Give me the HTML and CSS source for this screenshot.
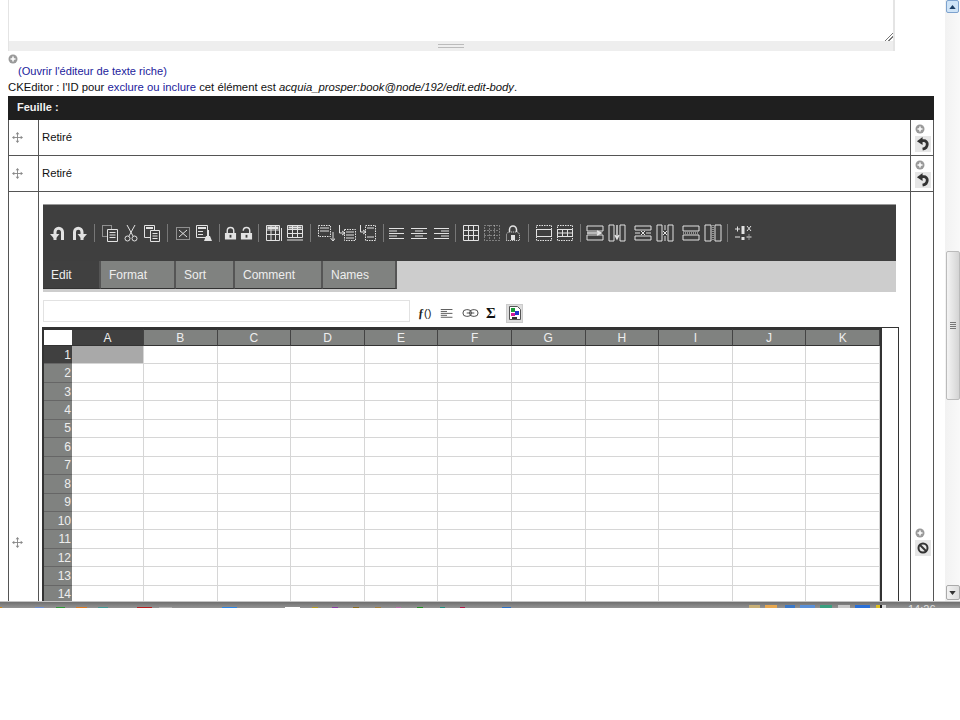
FILE: index.html
```html
<!DOCTYPE html>
<html lang="fr">
<head>
    <meta charset="UTF-8">
    <title>Feuille</title>
    <link rel="stylesheet" href="styles.css">
</head>
<body>
    <svg class="defs" xmlns="http://www.w3.org/2000/svg">
        <symbol id="i-undo" viewBox="0 0 18 18"><path d="M6 16V8a3.600 3.600 0 0 1 7.500 0v8" fill="none" stroke="currentColor" stroke-width="3"/><path d="M1 10h9.500l-4.700 5.500z" fill="currentColor"/></symbol>
        <symbol id="i-redo" viewBox="0 0 18 18"><path d="M12 16V8a3.600 3.600 0 0 0-7.500 0v8" fill="none" stroke="currentColor" stroke-width="3"/><path d="M17 10H7.500l4.700 5.500z" fill="currentColor"/></symbol>
        <symbol id="i-back" viewBox="0 0 16 16"><path d="M5 5h3.500a3.500 3.500 0 0 1 3.500 3.500c0 3-2 5-5 5.500" fill="none" stroke="currentColor" stroke-width="3"/><path d="M1 5.500L7 1v8.500z" fill="currentColor"/></symbol>
        <symbol id="i-copy" viewBox="0 0 18 18"><path d="M1.500 1.500h9v11h-9z" fill="none" stroke="currentColor" stroke-dasharray="1 1"/><path d="M6.500 5.500h10v12h-10z" fill="#3f3f3f" stroke="currentColor"/><path d="M8.500 8.500h6M8.500 11h6M8.500 13.500h6" stroke="currentColor"/></symbol>
        <symbol id="i-cut" viewBox="0 0 18 18"><path d="M5 1l6 11M13 1L7 12" stroke="currentColor" fill="none"/><circle cx="5.500" cy="14.500" r="2.500" fill="none" stroke="currentColor"/><circle cx="12.500" cy="14.500" r="2.500" fill="none" stroke="currentColor"/></symbol>
        <symbol id="i-paste" viewBox="0 0 18 18"><path d="M1.500 1.500h10v12h-10z" fill="none" stroke="currentColor"/><path d="M3 3h7v2H3z" fill="currentColor"/><path d="M7.500 6.500h9v11h-9z" fill="#3f3f3f" stroke="currentColor"/><path d="M9.500 9.500h5M9.500 12h5M9.500 14.500h5" stroke="currentColor"/></symbol>
        <symbol id="i-clear" viewBox="0 0 18 18"><path d="M2.500 3.500h13v12h-13z" fill="none" stroke="currentColor" stroke-dasharray="1 1"/><path d="M5 6l8 7M13 6l-8 7" stroke="currentColor"/></symbol>
        <symbol id="i-format" viewBox="0 0 18 18"><path d="M1.500 1.500h11v12h-11z" fill="none" stroke="currentColor"/><path d="M3 3h8v2H3zM3 7h5v1H3zM3 10h5v1H3z" fill="currentColor"/><path d="M12 6h2v6h-2zM9 17l2-5h4l2 5z" fill="currentColor"/></symbol>
        <symbol id="i-lock" viewBox="0 0 14 18"><path d="M3.500 9V6.500a3.500 3.500 0 0 1 7 0V9" fill="none" stroke="currentColor" stroke-width="1.500"/><path d="M1 9h12v7H1z" fill="currentColor"/><path d="M6 11h2v3H6z" fill="#3f3f3f"/></symbol>
        <symbol id="i-unlock" viewBox="0 0 14 18"><path d="M3.500 6.500a3.500 3.500 0 0 1 7 0V9" fill="none" stroke="currentColor" stroke-width="1.500"/><path d="M1 9h12v7H1z" fill="currentColor"/><path d="M6 11h2v3H6z" fill="#3f3f3f"/></symbol>
        <symbol id="i-colw" viewBox="0 0 18 18"><path d="M1.500 1.500h13v15h-13zM6 1.500v15M10.500 1.500v15M1.500 6h13M1.500 10.500h13" fill="none" stroke="currentColor"/><path d="M2.500 2.500h11v2.500h-11z" fill="currentColor"/><path d="M16.500 4v13" stroke="currentColor"/></symbol>
        <symbol id="i-rowh" viewBox="0 0 18 18"><path d="M1.500 1.500h15v12h-15zM1.500 5.500h15M1.500 9.500h15M6.500 1.500v12M11.500 1.500v12" fill="none" stroke="currentColor"/><path d="M2.500 2.500h13v2h-13z" fill="currentColor"/><path d="M1 16h16" stroke="currentColor"/></symbol>
        <symbol id="i-down" viewBox="0 0 18 18"><path d="M1.500 1.500h12v11h-12z" fill="none" stroke="currentColor" stroke-dasharray="1.500 1"/><path d="M3 4h9M3 7h9" stroke="currentColor"/><path d="M16 8v8M13.500 14l2.500 3 2.500-3" fill="none" stroke="currentColor"/></symbol>
        <symbol id="i-across" viewBox="0 0 18 18"><path d="M6.500 5.500h11v11h-11z" fill="none" stroke="currentColor" stroke-dasharray="1.500 1"/><path d="M8 8h8M8 11h8M8 14h8" stroke="currentColor"/><path d="M1.500 1v8h5M4 7l3 2-3 2" fill="none" stroke="currentColor"/></symbol>
        <symbol id="i-up" viewBox="0 0 18 18"><path d="M6.500 1.500h10v15h-10z" fill="none" stroke="currentColor" stroke-dasharray="1.500 1"/><path d="M8 4h7M8 13h7" stroke="currentColor"/><path d="M1.500 1v7h5M4 6l3 2-3 2" fill="none" stroke="currentColor"/></symbol>
        <symbol id="i-left" viewBox="0 0 18 18"><path d="M1 4.500h15M1 7h8M1 9.500h15M1 12h8M1 14.500h15" stroke="currentColor" stroke-width="1.200"/></symbol>
        <symbol id="i-center" viewBox="0 0 18 18"><path d="M1 4.500h16M5 7h8M1 9.500h16M5 12h8M1 14.500h16" stroke="currentColor" stroke-width="1.200"/></symbol>
        <symbol id="i-right" viewBox="0 0 18 18"><path d="M2 4.500h15M9 7h8M2 9.500h15M9 12h8M2 14.500h15" stroke="currentColor" stroke-width="1.200"/></symbol>
        <symbol id="i-grid" viewBox="0 0 18 18"><path d="M1.500 1.500h15v15h-15zM6.500 1.500v15M11.500 1.500v15M1.500 6.500h15M1.500 11.500h15" fill="none" stroke="currentColor"/></symbol>
        <symbol id="i-dots" viewBox="0 0 18 18"><path d="M1.500 1.500h15v15h-15zM6.500 1.500v15M11.500 1.500v15M1.500 6.500h15M1.500 11.500h15" fill="none" stroke="currentColor" stroke-dasharray="1 2" opacity=".8"/></symbol>
        <symbol id="i-shield" viewBox="0 0 18 18"><path d="M5.500 8V5.500a3.500 3.500 0 0 1 7 0V8" fill="none" stroke="currentColor" stroke-width="1.500"/><path d="M2.500 16.500V10l2-2h9l2 2v6.500z" fill="none" stroke="currentColor" stroke-dasharray="1 1"/><path d="M7 11h4v5H7z" fill="currentColor"/></symbol>
        <symbol id="i-merge" viewBox="0 0 18 18"><path d="M1.500 1.500h15v15h-15z" fill="none" stroke="currentColor" stroke-dasharray="1.500 1"/><path d="M1.500 5.500h15v7h-15z" fill="none" stroke="currentColor"/></symbol>
        <symbol id="i-table" viewBox="0 0 18 18"><path d="M1.500 1.500h15v15h-15z" fill="none" stroke="currentColor" stroke-dasharray="1.500 1"/><path d="M1.500 5.500h15v7h-15zM6.500 5.500v7M11.500 5.500v7M1.500 9h15" fill="none" stroke="currentColor"/></symbol>
        <symbol id="i-addrow" viewBox="0 0 18 18"><path d="M1 2h16v5H1zM1 11h16v5H1z" fill="none" stroke="currentColor"/><path d="M1 9h13M11 7l4 2-4 2" fill="none" stroke="currentColor" stroke-width="1.400"/></symbol>
        <symbol id="i-addcol" viewBox="0 0 18 18"><path d="M1 1h5v16H1zM12 1h5v16h-5z" fill="none" stroke="currentColor"/><path d="M9 1v13M7 11l2 4 2-4" fill="none" stroke="currentColor" stroke-width="1.400"/></symbol>
        <symbol id="i-delrow" viewBox="0 0 18 18"><path d="M1 2h16v4H1zM1 12h16v4H1z" fill="none" stroke="currentColor"/><path d="M1 9h5M12 9h5M7 7l4 4M11 7l-4 4" stroke="currentColor"/></symbol>
        <symbol id="i-delcol" viewBox="0 0 18 18"><path d="M1 1h5v16H1zM12 1h5v16h-5z" fill="none" stroke="currentColor"/><path d="M9 1v5M9 12v5M7 7l4 4M11 7l-4 4" stroke="currentColor"/></symbol>
        <symbol id="i-splitrow" viewBox="0 0 18 18"><path d="M1 2h16v5H1zM1 11h16v5H1z" fill="none" stroke="currentColor"/><path d="M1 9h16" stroke="currentColor" stroke-dasharray="1 1"/></symbol>
        <symbol id="i-splitcol" viewBox="0 0 18 18"><path d="M1 1h6v16H1zM11 1h6v16h-6z" fill="none" stroke="currentColor"/><path d="M9 1v16" stroke="currentColor" stroke-dasharray="1 1"/></symbol>
        <symbol id="i-math" viewBox="0 0 18 18"><path d="M7.500 2h3v8h-3zM7.500 13h3v3h-3z" fill="currentColor"/><path d="M1 5h5M3.500 2.500v5M1 13h5M13 2l4 5M17 2l-4 5M12.500 13h5" stroke="currentColor"/><path d="M14.500 10.500h1v1h-1zM14.500 14.500h1v1h-1z" fill="currentColor"/></symbol>
        <symbol id="i-move" viewBox="0 0 12 12"><path d="M6 1v10M1 6h10" stroke="currentColor"/><path d="M6 0l2 2.500H4zM6 12l2-2.500H4zM0 6l2.500-2v4zM12 6L9.500 4v4z" fill="currentColor"/></symbol>
        <symbol id="i-plus" viewBox="0 0 10 10"><circle cx="5" cy="5" r="4.500" fill="#9a9a9a"/><path d="M5 2.500v5M2.500 5h5" stroke="#fff" stroke-width="1.500"/></symbol>
        <symbol id="i-none" viewBox="0 0 14 14"><circle cx="7" cy="7" r="4.500" fill="none" stroke="currentColor" stroke-width="2"/><path d="M4 4l6 6" stroke="currentColor" stroke-width="2"/></symbol>
    </svg>

    <div class="screen">
        <div class="window">
            <div class="page">
                <div class="editor">
                    <div class="editor-text"><span class="resizer"></span></div>
                    <div class="editor-grip"><span class="grip-lines"></span></div>
                </div>
                <svg class="plus plus-top"><use href="#i-plus"/></svg>
                <p class="rich-link"><a href="#">(Ouvrir l'éditeur de texte riche)</a></p>
                <p class="ck-note">CKEditor : l'ID pour <a href="#">exclure ou inclure</a> cet élément est <em>acquia_prosper:book@node/192/edit.edit-body</em>.</p>

                <div class="list">
                    <div class="list-head">Feuille :</div>

                    <div class="row">
                        <div class="cell-handle"><svg class="move"><use href="#i-move"/></svg></div>
                        <div class="cell-main">Retiré</div>
                        <div class="cell-actions">
                            <svg class="plus"><use href="#i-plus"/></svg>
                            <span class="action"><svg class="action-icon"><use href="#i-back"/></svg></span>
                        </div>
                    </div>
                    <div class="row">
                        <div class="cell-handle"><svg class="move"><use href="#i-move"/></svg></div>
                        <div class="cell-main">Retiré</div>
                        <div class="cell-actions">
                            <svg class="plus"><use href="#i-plus"/></svg>
                            <span class="action"><svg class="action-icon"><use href="#i-back"/></svg></span>
                        </div>
                    </div>

                    <div class="row row-sheet">
                        <div class="cell-handle"><svg class="move"><use href="#i-move"/></svg></div>
                        <div class="cell-sheet">
                            <div class="toolbar">
                                <div class="tool-group"><svg class="tool"><use href="#i-undo"/></svg><svg class="tool"><use href="#i-redo"/></svg></div>
                                <div class="tool-group"><svg class="tool"><use href="#i-copy"/></svg><svg class="tool"><use href="#i-cut"/></svg><svg class="tool"><use href="#i-paste"/></svg></div>
                                <div class="tool-group"><svg class="tool"><use href="#i-clear"/></svg><svg class="tool"><use href="#i-format"/></svg></div>
                                <div class="tool-group tool-group-tight"><svg class="tool tool-small"><use href="#i-lock"/></svg><svg class="tool tool-small"><use href="#i-unlock"/></svg></div>
                                <div class="tool-group"><svg class="tool"><use href="#i-colw"/></svg><svg class="tool"><use href="#i-rowh"/></svg></div>
                                <div class="tool-group"><svg class="tool"><use href="#i-down"/></svg><svg class="tool"><use href="#i-across"/></svg><svg class="tool"><use href="#i-up"/></svg></div>
                                <div class="tool-group tool-group-align"><svg class="tool"><use href="#i-left"/></svg><svg class="tool"><use href="#i-center"/></svg><svg class="tool"><use href="#i-right"/></svg></div>
                                <div class="tool-group"><svg class="tool"><use href="#i-grid"/></svg><svg class="tool"><use href="#i-dots"/></svg><svg class="tool"><use href="#i-shield"/></svg></div>
                                <div class="tool-group"><svg class="tool"><use href="#i-merge"/></svg><svg class="tool"><use href="#i-table"/></svg></div>
                                <div class="tool-group tool-group-wide"><svg class="tool"><use href="#i-addrow"/></svg><svg class="tool"><use href="#i-addcol"/></svg><svg class="tool tool-next"><use href="#i-delrow"/></svg><svg class="tool"><use href="#i-delcol"/></svg><svg class="tool tool-next"><use href="#i-splitrow"/></svg><svg class="tool"><use href="#i-splitcol"/></svg></div>
                                <div class="tool-group tool-group-last"><svg class="tool"><use href="#i-math"/></svg></div>
                            </div>

                            <div class="tabs">
                                <span class="tab tab-active">Edit</span>
                                <span class="tab">Format</span>
                                <span class="tab">Sort</span>
                                <span class="tab">Comment</span>
                                <span class="tab">Names</span>
                            </div>

                            <div class="formula">
                                <div class="formula-input"></div>
                                <span class="fn-text"><b>ƒ</b>()</span>
                                <svg class="fn-icon"><use href="#i-left"/></svg>
                                <svg class="fn-link" viewBox="0 0 18 10"><rect x="1" y="1.500" width="9" height="7" rx="3.500" fill="none" stroke="#444"/><rect x="8" y="1.500" width="9" height="7" rx="3.500" fill="none" stroke="#444"/><path d="M5 5h8" stroke="#444"/></svg>
                                <span class="fn-sum">Σ</span>
                                <span class="fn-picker">
                                    <svg viewBox="0 0 14 16"><path d="M1.500 1.500h8l3 3v10h-11z" fill="#fff" stroke="#555"/><path d="M3 3h4v4H3z" fill="#1a9a3a"/><path d="M7 6h4v4H7z" fill="#2233cc"/><path d="M3 8h4v3H3z" fill="#d01a9a"/><path d="M4 12h5v2H4z" fill="#333"/></svg>
                                </span>
                            </div>

                            <div class="sheet">
                                <table class="grid">
                                    <thead>
                                        <tr><th class="corner"></th><th class="col-active">A</th><th>B</th><th>C</th><th>D</th><th>E</th><th>F</th><th>G</th><th>H</th><th>I</th><th>J</th><th>K</th></tr>
                                    </thead>
                                    <tbody>
                                        <tr><th class="row-active">1</th><td class="cell-active"></td><td></td><td></td><td></td><td></td><td></td><td></td><td></td><td></td><td></td><td></td></tr>
                                        <tr><th>2</th><td></td><td></td><td></td><td></td><td></td><td></td><td></td><td></td><td></td><td></td><td></td></tr>
                                        <tr><th>3</th><td></td><td></td><td></td><td></td><td></td><td></td><td></td><td></td><td></td><td></td><td></td></tr>
                                        <tr><th>4</th><td></td><td></td><td></td><td></td><td></td><td></td><td></td><td></td><td></td><td></td><td></td></tr>
                                        <tr><th>5</th><td></td><td></td><td></td><td></td><td></td><td></td><td></td><td></td><td></td><td></td><td></td></tr>
                                        <tr><th>6</th><td></td><td></td><td></td><td></td><td></td><td></td><td></td><td></td><td></td><td></td><td></td></tr>
                                        <tr><th>7</th><td></td><td></td><td></td><td></td><td></td><td></td><td></td><td></td><td></td><td></td><td></td></tr>
                                        <tr><th>8</th><td></td><td></td><td></td><td></td><td></td><td></td><td></td><td></td><td></td><td></td><td></td></tr>
                                        <tr><th>9</th><td></td><td></td><td></td><td></td><td></td><td></td><td></td><td></td><td></td><td></td><td></td></tr>
                                        <tr><th>10</th><td></td><td></td><td></td><td></td><td></td><td></td><td></td><td></td><td></td><td></td><td></td></tr>
                                        <tr><th>11</th><td></td><td></td><td></td><td></td><td></td><td></td><td></td><td></td><td></td><td></td><td></td></tr>
                                        <tr><th>12</th><td></td><td></td><td></td><td></td><td></td><td></td><td></td><td></td><td></td><td></td><td></td></tr>
                                        <tr><th>13</th><td></td><td></td><td></td><td></td><td></td><td></td><td></td><td></td><td></td><td></td><td></td></tr>
                                        <tr><th>14</th><td></td><td></td><td></td><td></td><td></td><td></td><td></td><td></td><td></td><td></td><td></td></tr>
                                    </tbody>
                                </table>
                            </div>
                        </div>
                        <div class="cell-actions">
                            <svg class="plus"><use href="#i-plus"/></svg>
                            <span class="action action-none"><svg class="action-icon"><use href="#i-none"/></svg></span>
                        </div>
                    </div>
                </div>
            </div>

            <div class="scrollbar">
                <span class="scroll-up"><svg viewBox="0 0 8 5"><path d="M4 0l4 5H0z" fill="#1c3f66"/></svg></span>
                <span class="scroll-thumb"><span class="thumb-grip"></span></span>
                <span class="scroll-down"><svg viewBox="0 0 8 5"><path d="M4 5l4-5H0z" fill="#333"/></svg></span>
            </div>
        </div>

        <div class="taskbar">
            <div class="task-apps"></div>
            <div class="task-tray"></div>
            <span class="clock">14:26</span>
        </div>
    </div>
</body>
</html>
```

FILE: styles.css
```css
* {
    box-sizing: border-box;
    margin: 0;
    padding: 0;
}
body {
    background: #fff;
    color: #111;
    font-family: "Liberation Sans", Arial, sans-serif;
    font-size: 11.3px;
}
a {
    color: #22229c;
    text-decoration: none;
}
.defs {
    display: none;
}

/* window */
.screen {
    height: 608px;
    display: flex;
    flex-direction: column;
    overflow: hidden;
}
.window {
    height: 601px;
    display: flex;
    overflow: hidden;
}
.page {
    width: 945px;
    padding: 0 11px 0 8px;
}

/* collapsed text editor */
.editor {
    width: 887px;
    border: solid #e4e4e4;
    border-width: 0 2px 0 1px;
}
.editor-text {
    height: 41px;
    display: flex;
    justify-content: flex-end;
    align-items: flex-end;
}
.resizer {
    width: 8px;
    height: 8px;
    background: linear-gradient(135deg, transparent 45%, #777 45%, #777 55%, transparent 55%, transparent 68%, #777 68%, #777 76%, transparent 76%);
}
.editor-grip {
    height: 10px;
    background: #eee;
    display: flex;
    justify-content: center;
    align-items: center;
}
.grip-lines {
    width: 26px;
    height: 4px;
    border: solid #bbb;
    border-width: 1px 0;
}
.plus {
    display: block;
    width: 10px;
    height: 10px;
}
.plus-top {
    margin-top: 3px;
}
.rich-link {
    padding-left: 10px;
    font-size: 11.1px;
    line-height: 14px;
}
.ck-note {
    margin-top: 2px;
    line-height: 14px;
}

/* item list */
.list {
    width: 926px;
    margin-top: 2px;
}
.list-head {
    height: 24px;
    padding-left: 9px;
    background: #1f1f1f;
    color: #f2f2f2;
    font-size: 11px;
    font-weight: bold;
    line-height: 23px;
}
.row {
    height: 36px;
    display: flex;
    border: solid #555;
    border-width: 0 1px 1px;
}
.row-sheet {
    height: 700px;
    border-bottom: 0;
}
.cell-handle {
    width: 30px;
    flex: none;
    padding-left: 3px;
    display: flex;
    align-items: center;
    border-right: 1px solid #555;
}
.move {
    width: 11px;
    height: 11px;
    color: #888;
}
.cell-main {
    flex: 1;
    padding: 11px 0 0 3px;
}
.cell-sheet {
    flex: 1;
    padding: 12px 0 0 4px;
}
.cell-actions {
    width: 23px;
    flex: none;
    padding-left: 4px;
    display: flex;
    flex-direction: column;
    justify-content: center;
    gap: 2px;
    border-left: 1px solid #555;
}
.action {
    width: 16px;
    height: 16px;
    background: #e6e6e6;
    display: flex;
    justify-content: center;
    align-items: center;
}
.action-icon {
    width: 15px;
    height: 15px;
    color: #333;
}
.action-none .action-icon {
    width: 14px;
    height: 14px;
}

/* sheet toolbar */
.toolbar {
    width: 853px;
    height: 57px;
    padding-top: 19px;
    background: #3f3f3f;
    border-top: 1px solid #999;
    display: flex;
    align-items: flex-start;
}
.tool-group {
    height: 18px;
    display: flex;
    gap: 3px;
    padding: 0 6px;
    border-right: 1px solid #777;
}
.tool-group-tight {
    padding: 0 5px 0 4px;
}
.tool-group-align {
    gap: 4px;
    padding: 0 5px 0 4px;
}
.tool-group-wide {
    padding: 0 5px;
    gap: 4px;
}
.tool-group-last {
    border-right: 0;
}
.tool {
    width: 18px;
    height: 18px;
    color: #e2e2e2;
}
.tool-small {
    width: 13px;
}
.tool-next {
    margin-left: 4px;
}

/* tabs */
.tabs {
    width: 853px;
    height: 31px;
    background: #cdcdcd;
    display: flex;
    align-items: flex-start;
}
.tab {
    height: 28px;
    padding-left: 8px;
    background: #808280;
    border: solid #555;
    border-width: 0 2px 1px 0;
    border-bottom-color: #333;
    color: #eee;
    font-size: 12px;
    line-height: 28px;
}
.tab:nth-child(1) {
    width: 58px;
    background: #404040;
}
.tab:nth-child(2) {
    width: 75px;
}
.tab:nth-child(3) {
    width: 59px;
}
.tab:nth-child(4) {
    width: 88px;
}
.tab:nth-child(5) {
    width: 74px;
}

/* formula bar */
.formula {
    height: 22px;
    margin-top: 8px;
    display: flex;
    align-items: center;
}
.formula-input {
    width: 367px;
    height: 22px;
    border: 1px solid #e2e2e2;
    margin-right: 8px;
}
.fn-text,
.fn-icon,
.fn-link,
.fn-sum,
.fn-picker {
    margin-top: 4px;
}
.fn-text {
    width: 22px;
    font-size: 11px;
    color: #222;
}
.fn-text b {
    font-family: "Liberation Serif", serif;
    font-size: 12px;
}
.fn-icon {
    width: 14px;
    height: 14px;
    color: #555;
    margin-right: 8px;
}
.fn-link {
    width: 17px;
    height: 10px;
    margin-right: 7px;
}
.fn-sum {
    width: 20px;
    font-family: "Liberation Serif", serif;
    font-size: 15px;
    font-weight: bold;
    color: #111;
}
.fn-picker {
    width: 17px;
    height: 19px;
    background: #ddd;
    border: 1px solid #ccc;
    display: flex;
    justify-content: center;
    align-items: center;
}
.fn-picker svg {
    width: 14px;
    height: 16px;
}

/* spreadsheet */
.sheet {
    width: 857px;
    margin: 5px 0 0 -1px;
    border: solid #333;
    border-width: 1px 1px 0 0;
}
.grid {
    width: 840px;
    table-layout: fixed;
    border-collapse: separate;
    border-spacing: 0;
    border: solid #333;
    border-width: 1px 2px 0 2px;
}
.grid th {
    background: #808280;
    color: #eee;
    font-size: 12px;
    font-weight: normal;
}
.grid thead th {
    height: 17px;
    border-top: 1px solid #333;
    border-bottom: 1px solid #333;
    border-right: 1px solid #444;
}
.grid .corner {
    width: 28px;
    background: #fff;
    border-right: 0;
}
.grid .col-active {
    width: 72px;
    background: #404040;
}
.grid tbody th {
    height: 18.45px;
    padding-right: 1px;
    text-align: right;
    border-bottom: 1px solid #666;
}
.grid .row-active {
    background: #404040;
}
.grid td {
    border: solid #d6d6d6;
    border-width: 0 1px 1px 0;
}
.grid .cell-active {
    background: #a9a9a9;
}

/* browser scrollbar */
.scrollbar {
    width: 15px;
    background: linear-gradient(to right, #f2f2f2, #f9f9f9);
    display: flex;
    flex-direction: column;
    align-items: center;
}
.scroll-up {
    width: 13px;
    height: 13px;
    background: #cfe4f7;
    border: 1px solid #7da2ce;
    border-radius: 2px;
    display: flex;
    justify-content: center;
    align-items: center;
}
.scroll-up svg,
.scroll-down svg {
    width: 7px;
    height: 4px;
}
.scroll-thumb {
    width: 14px;
    height: 149px;
    margin-top: 238px;
    background: linear-gradient(to right, #f4f4f4, #d4d4d4);
    border: 1px solid #bbb;
    border-radius: 2px;
    display: flex;
    justify-content: center;
    align-items: center;
}
.thumb-grip {
    width: 6px;
    height: 7px;
    background: repeating-linear-gradient(to bottom, #777 0, #777 1px, transparent 1px, transparent 2px);
}
.scroll-down {
    width: 14px;
    height: 15px;
    margin-top: auto;
    margin-bottom: 1px;
    background: linear-gradient(to right, #f2f2f2, #ddd);
    border: 1px solid #aaa;
    border-radius: 2px;
    display: flex;
    justify-content: center;
    align-items: center;
}

/* cut off taskbar along the bottom */
.taskbar {
    position: relative;
    height: 7px;
    border-top: 1px solid #c4c4c4;
    background: linear-gradient(to bottom, #6f6f6f 0, #949494 100%);
    overflow: hidden;
}
.task-apps {
    height: 1px;
    margin-top: 5px;
    background: linear-gradient(to right,
        #c98a20 0 2px, transparent 2px 35px,
        #6f8fd0 35px 44px, transparent 44px 56px,
        #2c9a34 56px 65px, transparent 65px 76px,
        #e07a20 76px 87px, transparent 87px 98px,
        #3f9a96 98px 108px, transparent 108px 137px,
        #b81c1c 137px 152px, transparent 152px 159px,
        #b0b0b0 159px 172px, transparent 172px 222px,
        #2a86e8 222px 237px, transparent 237px 285px,
        #fff 285px 300px, transparent 300px 312px,
        #b8a020 312px 318px, transparent 318px 332px,
        #8a3aa8 332px 338px, transparent 338px 353px,
        #8a6a1c 353px 359px, transparent 359px 375px,
        #a8803a 375px 381px, transparent 381px 396px,
        #c070b0 396px 401px, transparent 401px 417px,
        #1f9020 417px 423px, transparent 423px 440px,
        #1f9080 440px 445px, transparent 445px 460px,
        #b01848 460px 465px, transparent 465px 502px,
        #2a70c8 502px 511px, transparent 511px);
}
.task-tray {
    position: absolute;
    right: 0;
    bottom: 0;
    width: 960px;
    height: 3px;
    background: linear-gradient(to right,
        transparent 749px,
        #c8b078 749px 760px, transparent 760px 765px,
        #e8a850 765px 777px, transparent 777px 785px,
        #3a78c8 785px 795px, transparent 795px 800px,
        #5a90d8 800px 815px, transparent 815px 820px,
        #3aa080 820px 832px, transparent 832px 838px,
        #c8c8c8 838px 850px, transparent 850px 855px,
        #2a70d8 855px 870px, transparent 870px 876px,
        #e0c020 876px 880px, #222 880px 882px, #ddd 882px 886px, transparent 886px);
}
.clock {
    position: absolute;
    left: 908px;
    top: 1px;
    color: #e0e0e0;
    font-size: 11px;
    line-height: 12px;
}
```
